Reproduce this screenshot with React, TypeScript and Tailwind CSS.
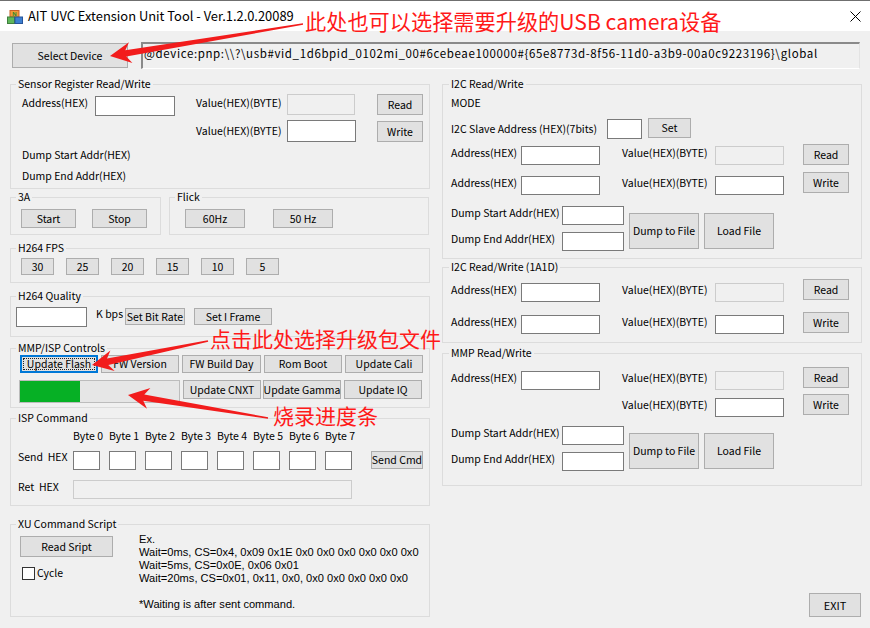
import type { ReactNode } from 'react';

function Btn({ children, className = '' }: { children?: ReactNode; className?: string }) {
    return (
        <div className={`flex items-center justify-center border border-[#adadad] bg-[#e1e1e1] leading-[14px] ${className}`}>
            {children}
        </div>
    );
}

function Edit({ className = '', disabled = false }: { className?: string; disabled?: boolean }) {
    return (
        <div
            className={`border ${disabled ? 'border-[#cccccc] bg-[#f0f0f0]' : 'border-[#7a7a7a] bg-white'} ${className}`}
        />
    );
}

function Group({
    title,
    className = '',
    legend = 'ml-[5px]',
    children,
}: {
    title: string;
    className?: string;
    legend?: string;
    children?: ReactNode;
}) {
    return (
        <fieldset className={`min-w-0 border border-[#dcdcdc] ${className}`}>
            <legend className={`${legend} px-[2px] leading-[14px]`}>{title}</legend>
            {children}
        </fieldset>
    );
}

// tapered red arrow, thin tail → wide head
function arrow(x1: number, y1: number, x2: number, y2: number) {
    const dx = x2 - x1;
    const dy = y2 - y1;
    const len = Math.hypot(dx, dy);
    const ux = dx / len;
    const uy = dy / len;
    const nx = -uy;
    const ny = ux;
    const head = 21;
    const headW = 21;
    const neck = 6.5;
    const tail = 1.5;
    const bx = x2 - ux * head;
    const by = y2 - uy * head;
    const nbx = x2 - ux * (head - 5);
    const nby = y2 - uy * (head - 5);
    const pts = [
        [x1 + (nx * tail) / 2, y1 + (ny * tail) / 2],
        [nbx + (nx * neck) / 2, nby + (ny * neck) / 2],
        [bx + (nx * headW) / 2, by + (ny * headW) / 2],
        [x2, y2],
        [bx - (nx * headW) / 2, by - (ny * headW) / 2],
        [nbx - (nx * neck) / 2, nby - (ny * neck) / 2],
        [x1 - (nx * tail) / 2, y1 - (ny * tail) / 2],
    ];
    return pts.map((p) => `${p[0].toFixed(1)},${p[1].toFixed(1)}`).join(' ');
}

function AppIcon() {
    return (
        <svg width="16" height="14" viewBox="0 0 16 14">
            <rect x="3" y="0.5" width="9" height="6.5" fill="#f29b38" stroke="#c8602a" strokeWidth="1" />
            <text x="7.5" y="6" fontSize="6" textAnchor="middle" fill="#2a8a2a" fontFamily="Liberation Sans, sans-serif" fontWeight="bold">N</text>
            <rect x="0.5" y="7" width="7" height="6.5" fill="#5fb65a" stroke="#3f7f3c" strokeWidth="1" />
            <rect x="8" y="7" width="7.5" height="6.5" fill="#3c7fd0" stroke="#27549a" strokeWidth="1" />
        </svg>
    );
}

function TitleBar() {
    return (
        <div className="flex h-[31px] items-center border-t border-[#6f6f6f] bg-white">
            <div className="ml-[7px] mt-[1px]">
                <AppIcon />
            </div>
            <span className="ml-[5px] text-[12.9px] leading-[16px]">AIT UVC Extension Unit Tool - Ver.1.2.0.20089</span>
            <svg className="ml-auto mr-[9px]" width="11" height="11" viewBox="0 0 11 11">
                <path d="M0.5 0.5 L10.5 10.5 M10.5 0.5 L0.5 10.5" stroke="#000" strokeWidth="1" />
            </svg>
        </div>
    );
}

function LeftColumn() {
    const fps = ['30', '25', '20', '15', '10', '5'];
    return (
        <div className="ml-[10px] flex w-[420px] flex-col">
            <Group title="Sensor Register Read/Write" className="h-[112px]">
                <div className="mt-[3px] flex">
                    <span className="ml-[11px] mt-[2px] w-[73px]">Address(HEX)</span>
                    <Edit className="mt-[2px] h-[20px] w-[80px]" />
                    <span className="ml-[21px] mt-[2px] w-[91px]">Value(HEX)(BYTE)</span>
                    <Edit disabled className="h-[21px] w-[68px]" />
                    <Btn className="ml-[22px] h-[21px] w-[46px]">Read</Btn>
                </div>
                <div className="mt-[4px] flex">
                    <span className="ml-[185px] mt-[4px] w-[91px]">Value(HEX)(BYTE)</span>
                    <Edit className="h-[22px] w-[69px]" />
                    <Btn className="ml-[21px] mt-[1px] h-[21px] w-[46px]">Write</Btn>
                </div>
                <div className="ml-[11px] mt-[6px]">Dump Start Addr(HEX)</div>
                <div className="ml-[11px] mt-[7px]">Dump End Addr(HEX)</div>
            </Group>

            <div className="mt-[1px] flex gap-[8px]">
                <Group title="3A" className="h-[45px] w-[151px]">
                    <div className="mt-[5px] flex">
                        <Btn className="ml-[10px] h-[19px] w-[55px]">Start</Btn>
                        <Btn className="ml-[16px] h-[19px] w-[55px]">Stop</Btn>
                    </div>
                </Group>
                <Group title="Flick" className="h-[45px] w-[260px]">
                    <div className="mt-[5px] flex">
                        <Btn className="ml-[15px] h-[19px] w-[60px]">60Hz</Btn>
                        <Btn className="ml-[28px] h-[19px] w-[60px]">50 Hz</Btn>
                    </div>
                </Group>
            </div>

            <Group title="H264 FPS" className="mt-[6px] h-[42px]">
                <div className="ml-[10px] mt-[3px] flex gap-[12px]">
                    {fps.map((f) => (
                        <Btn key={f} className="h-[17px] w-[33px]">
                            {f}
                        </Btn>
                    ))}
                </div>
            </Group>

            <Group title="H264 Quality" className="mt-[6px] h-[48px]">
                <div className="mt-[4px] flex">
                    <Edit className="ml-[5px] h-[20px] w-[71px]" />
                    <span className="ml-[9px] w-[29px]">K bps</span>
                    <Btn className="mt-[1px] h-[17px] w-[60px]">Set Bit Rate</Btn>
                    <Btn className="ml-[9px] mt-[1px] h-[17px] w-[78px]">Set I Frame</Btn>
                </div>
            </Group>

            <Group title="MMP/ISP Controls" className="mt-[4px] h-[67px]">
                <div className="ml-[9px] flex gap-[3px]">
                    <div className="flex h-[18px] w-[78px] items-center justify-center border-2 border-[#0078d7] bg-[#e1e1e1] p-[1px]">
                        <div className="flex h-full w-full items-center justify-center border border-dotted border-[#222]">
                            Update Flash
                        </div>
                    </div>
                    <Btn className="h-[18px] w-[78px]">FW Version</Btn>
                    <Btn className="h-[18px] w-[79px]">FW Build Day</Btn>
                    <Btn className="h-[18px] w-[78px]">Rom Boot</Btn>
                    <Btn className="h-[18px] w-[78px]">Update Cali</Btn>
                </div>
                <div className="ml-[8px] mt-[7px] flex">
                    <div className="h-[23px] w-[161px] border border-[#bcbcbc] bg-[#e6e6e6]">
                        <div className="h-full w-[60px] bg-[#06b025]" />
                    </div>
                    <Btn className="ml-[3px] h-[19px] w-[78px]">Update CNXT</Btn>
                    <Btn className="ml-[2px] h-[19px] w-[78px]">Update Gamma</Btn>
                    <Btn className="ml-[3px] h-[19px] w-[78px]">Update IQ</Btn>
                </div>
            </Group>

            <Group title="ISP Command" className="mt-[3px] h-[95px]">
                <div className="ml-[62px] mt-[4px] flex">
                    {[0, 1, 2, 3, 4, 5, 6, 7].map((b) => (
                        <span key={b} className="w-[36px]">
                            Byte {b}
                        </span>
                    ))}
                </div>
                <div className="mt-[8px] flex">
                    <span className="ml-[7px] w-[55px] whitespace-pre leading-[12px]">Send  HEX</span>
                    <div className="flex gap-[9px]">
                        {[0, 1, 2, 3, 4, 5, 6, 7].map((b) => (
                            <Edit key={b} className="h-[19px] w-[27px]" />
                        ))}
                    </div>
                    <Btn className="ml-[19px] h-[18px] w-[52px]">Send Cmd</Btn>
                </div>
                <div className="mt-[10px] flex">
                    <span className="ml-[7px] w-[55px] whitespace-pre">Ret  HEX</span>
                    <Edit disabled className="h-[19px] w-[279px] border-[#adadad]" />
                </div>
            </Group>

            <Group title="XU Command Script" className="mt-[11px] h-[100px]">
                <div className="flex">
                    <div className="ml-[9px] w-[93px]">
                        <Btn className="mt-[5px] h-[21px] w-[93px]">Read Sript</Btn>
                        <div className="mt-[9px] flex items-center">
                            <div className="ml-[2px] h-[13px] w-[13px] border border-[#333333] bg-white" />
                            <span className="ml-[2px]">Cycle</span>
                        </div>
                    </div>
                    <div className="ml-[26px] mt-[2px] font-['Liberation_Sans',sans-serif] text-[11.1px] leading-[13px]">
                        <div>Ex.</div>
                        <div>Wait=0ms, CS=0x4, 0x09 0x1E 0x0 0x0 0x0 0x0 0x0 0x0</div>
                        <div>Wait=5ms, CS=0x0E, 0x06 0x01</div>
                        <div>Wait=20ms, CS=0x01, 0x11, 0x0, 0x0 0x0 0x0 0x0 0x0</div>
                        <div className="mt-[13px]">*Waiting is after sent command.</div>
                    </div>
                </div>
            </Group>
        </div>
    );
}

function AddrValueRow({ mt, off, read }: { mt: string; off: string; read: string }) {
    return (
        <div className={`${mt} flex`}>
            <span className={`ml-[8px] w-[70px] ${off}`}>Address(HEX)</span>
            <Edit className={`${off} h-[19px] w-[79px]`} />
            <span className={`ml-[22px] w-[93px] ${off}`}>Value(HEX)(BYTE)</span>
            <Edit disabled={read === 'Read'} className={`${off} h-[19px] w-[69px]`} />
            <Btn className="ml-[19px] h-[21px] w-[46px]">{read}</Btn>
        </div>
    );
}

function DumpBlock({ mt }: { mt: string }) {
    return (
        <div className={`${mt} flex`}>
            <div className="ml-[8px]">
                <div className="flex">
                    <span className="w-[111px]">Dump Start Addr(HEX)</span>
                    <Edit className="h-[19px] w-[62px]" />
                </div>
                <div className="mt-[7px] flex">
                    <span className="w-[111px]">Dump End Addr(HEX)</span>
                    <Edit className="h-[19px] w-[62px]" />
                </div>
            </div>
            <Btn className="ml-[5px] mt-[7px] h-[36px] w-[70px]">Dump to File</Btn>
            <Btn className="ml-[5px] mt-[7px] h-[36px] w-[70px]">Load File</Btn>
        </div>
    );
}

function RightColumn() {
    return (
        <div className="ml-[12px] flex w-[420px] flex-col">
            <Group title="I2C Read/Write" legend="ml-[6px]" className="h-[182px]">
                <div className="ml-[8px] mt-[5px]">MODE</div>
                <div className="mt-[8px] flex">
                    <span className="ml-[8px] mt-[4px] w-[156px]">I2C Slave Address (HEX)(7bits)</span>
                    <Edit className="mt-[1px] h-[20px] w-[35px]" />
                    <Btn className="ml-[6px] h-[20px] w-[43px]">Set</Btn>
                </div>
                <AddrValueRow mt="mt-[5px]" off="mt-[2px]" read="Read" />
                <AddrValueRow mt="mt-[7px]" off="mt-[4px]" read="Write" />
                <DumpBlock mt="mt-[11px]" />
            </Group>

            <Group title="I2C Read/Write (1A1D)" legend="ml-[6px]" className="mt-[1px] h-[83px]">
                <AddrValueRow mt="mt-[5px]" off="mt-[4px]" read="Read" />
                <AddrValueRow mt="mt-[10px]" off="mt-[3px]" read="Write" />
            </Group>

            <Group title="MMP Read/Write" legend="ml-[6px]" className="mt-[3px] h-[140px]">
                <AddrValueRow mt="mt-[7px]" off="mt-[4px]" read="Read" />
                <div className="mt-[4px] flex">
                    <span className="ml-[179px] mt-[4px] w-[93px]">Value(HEX)(BYTE)</span>
                    <Edit className="mt-[4px] h-[19px] w-[69px]" />
                    <Btn className="ml-[19px] h-[21px] w-[46px]">Write</Btn>
                </div>
                <DumpBlock mt="mt-[9px]" />
            </Group>

            <Btn className="mr-[1px] mt-[107px] h-[24px] w-[52px] self-end text-[11px]">EXIT</Btn>
        </div>
    );
}

function Annotations() {
    return (
        <div className="pointer-events-none absolute inset-0 text-[#ff1a1a]">
            <svg className="absolute left-0 top-0" width="870" height="628">
                <polygon points={arrow(303, 24, 110, 56)} fill="#f21c1c" />
                <polygon points={arrow(208, 341, 92, 365)} fill="#f21c1c" />
                <polygon points={arrow(268, 418, 128, 395)} fill="#f21c1c" />
            </svg>
            <div className="absolute left-[305px] top-[9px] text-[21.2px] leading-[24px]">
                此处也可以选择需要升级的USB camera设备
            </div>
            <div className="absolute left-[210px] top-[326px] text-[21px] leading-[24px]">
                点击此处选择升级包文件
            </div>
            <div className="absolute left-[273px] top-[403px] text-[21px] leading-[24px]">
                烧录进度条
            </div>
        </div>
    );
}

export default function App() {
    return (
        <div className="relative h-[628px] w-[870px] overflow-hidden whitespace-nowrap bg-[#f0f0f0] font-['Noto_Sans_CJK_SC',sans-serif] text-[10.5px] leading-[14px] text-black">
            <TitleBar />
            <div className="mt-[11px] flex">
                <Btn className="ml-[12px] mt-[1px] h-[25px] w-[116px]">Select Device</Btn>
                <div className="ml-[13px] h-[27px] w-[719px] border-b border-l-2 border-r border-t-2 border-b-white border-l-[#8a8a8a] border-r-[#e3e3e3] border-t-[#8a8a8a] pl-[1px] pt-[1px] text-[11.5px] leading-[16px] tracking-[0.62px]">
                    @device:pnp:\\?\usb#vid_1d6bpid_0102mi_00#6cebeae100000#{'{'}65e8773d-8f56-11d0-a3b9-00a0c9223196{'}'}\global
                </div>
            </div>
            <div className="mt-[8px] flex">
                <LeftColumn />
                <RightColumn />
            </div>
            <Annotations />
        </div>
    );
}
